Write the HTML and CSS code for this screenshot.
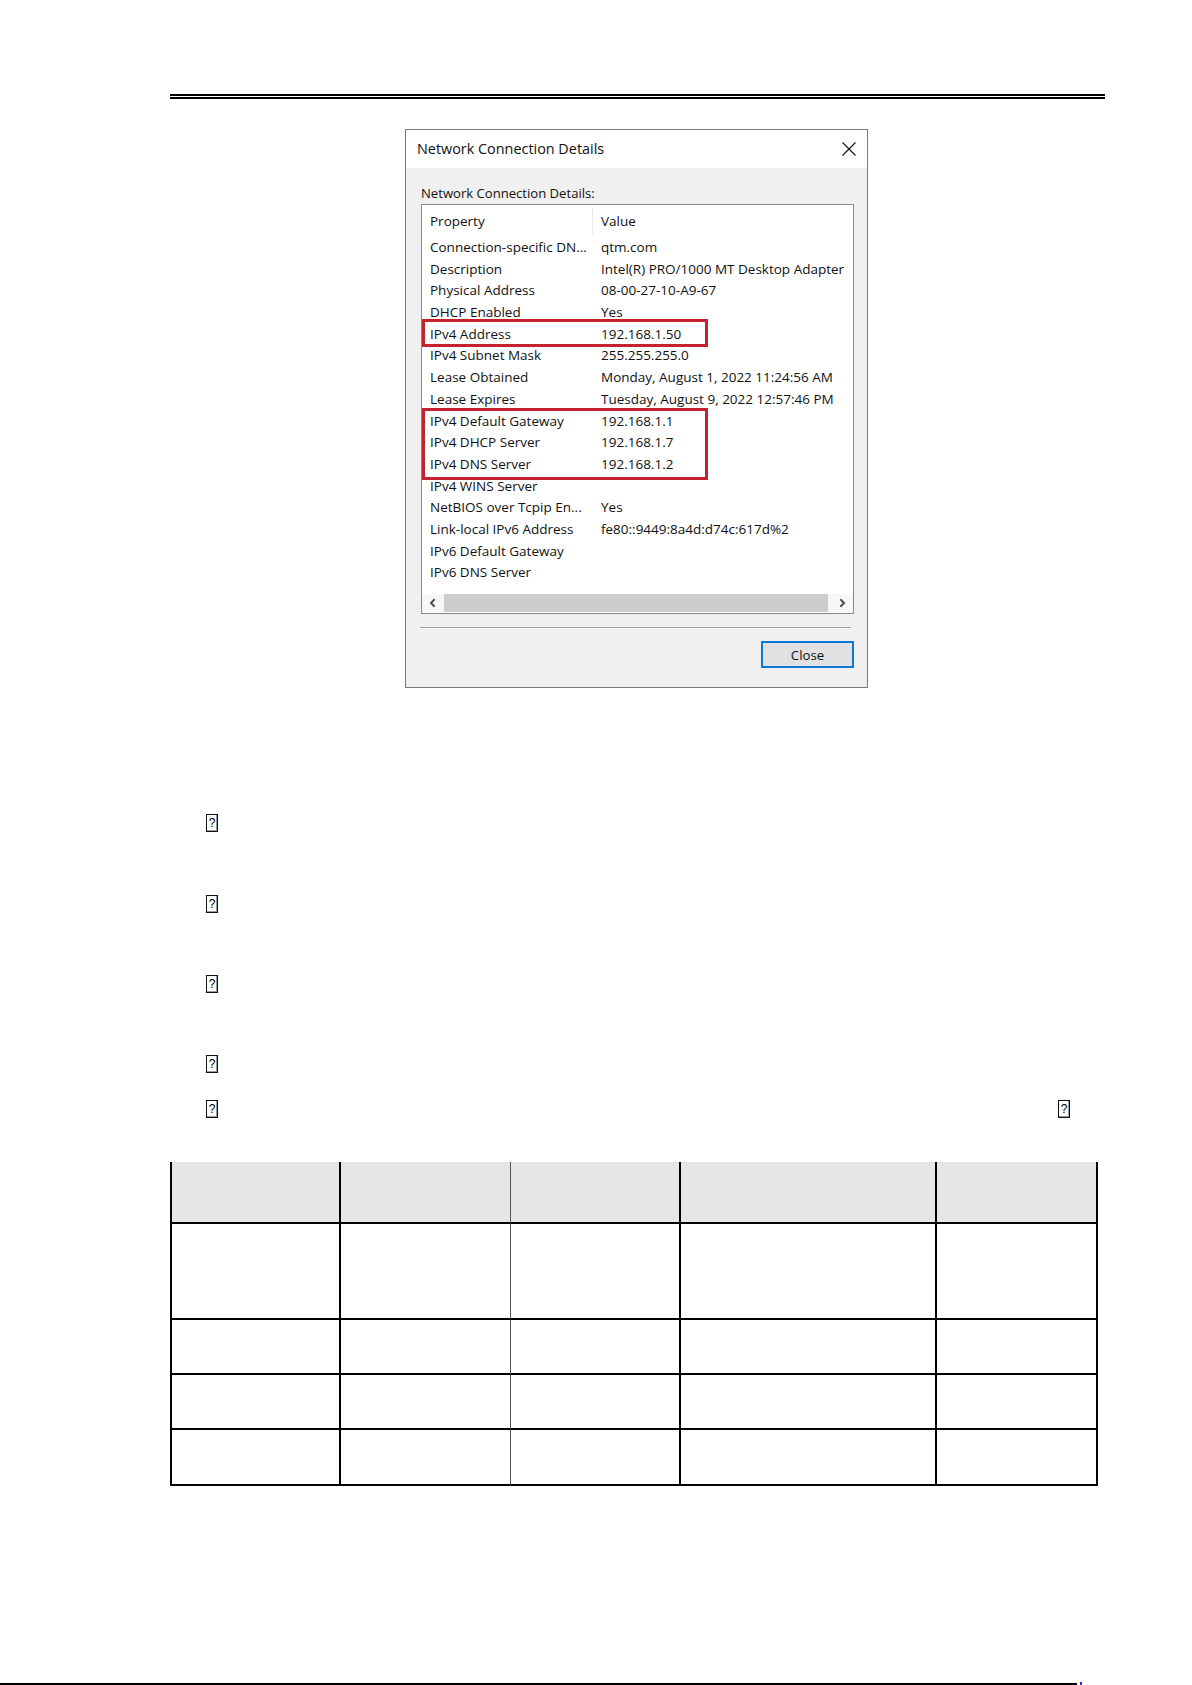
FILE: index.html
```html
<!DOCTYPE html>
<html lang="en">
<head>
<meta charset="utf-8">
<title>Network Connection Details</title>
<link rel="stylesheet" href="styles.css">
</head>
<body>
<div class="page">
  <div class="head-rule"></div>

  <div class="dialog">
    <div class="titlebar">
      <span class="title">Network Connection Details</span>
      <svg class="close-x" width="14" height="14" viewBox="0 0 14 14"><path d="M0.5 0.5 L13.5 13.5 M13.5 0.5 L0.5 13.5" stroke="#111" stroke-width="1.1" fill="none"/></svg>
    </div>
    <div class="dlg-body">
      <div class="label">Network Connection Details:</div>
      <div class="listbox">
        <div class="lv-head"><div class="c1">Property</div><div class="c2">Value</div></div>
        <div class="lv-rows">
          <div class="row"><span class="c1">Connection-specific DN...</span><span class="c2">qtm.com</span></div>
          <div class="row"><span class="c1">Description</span><span class="c2">Intel(R) PRO/1000 MT Desktop Adapter</span></div>
          <div class="row"><span class="c1">Physical Address</span><span class="c2">08-00-27-10-A9-67</span></div>
          <div class="row"><span class="c1">DHCP Enabled</span><span class="c2">Yes</span></div>
          <div class="row"><span class="c1">IPv4 Address</span><span class="c2">192.168.1.50</span></div>
          <div class="row"><span class="c1">IPv4 Subnet Mask</span><span class="c2">255.255.255.0</span></div>
          <div class="row"><span class="c1">Lease Obtained</span><span class="c2">Monday, August 1, 2022 11:24:56 AM</span></div>
          <div class="row"><span class="c1">Lease Expires</span><span class="c2">Tuesday, August 9, 2022 12:57:46 PM</span></div>
          <div class="row"><span class="c1">IPv4 Default Gateway</span><span class="c2">192.168.1.1</span></div>
          <div class="row"><span class="c1">IPv4 DHCP Server</span><span class="c2">192.168.1.7</span></div>
          <div class="row"><span class="c1">IPv4 DNS Server</span><span class="c2">192.168.1.2</span></div>
          <div class="row"><span class="c1">IPv4 WINS Server</span><span class="c2"></span></div>
          <div class="row"><span class="c1">NetBIOS over Tcpip En...</span><span class="c2">Yes</span></div>
          <div class="row"><span class="c1">Link-local IPv6 Address</span><span class="c2">fe80::9449:8a4d:d74c:617d%2</span></div>
          <div class="row"><span class="c1">IPv6 Default Gateway</span><span class="c2"></span></div>
          <div class="row"><span class="c1">IPv6 DNS Server</span><span class="c2"></span></div>
        </div>
        <div class="hscroll">
          <div class="arrow"><svg width="7" height="10" viewBox="0 0 7 10"><path d="M5.6 1.2 L2 5 L5.6 8.8" stroke="#505050" stroke-width="2" fill="none"/></svg></div>
          <div class="thumb"></div>
          <div class="arrow"><svg width="7" height="10" viewBox="0 0 7 10"><path d="M1.4 1.2 L5 5 L1.4 8.8" stroke="#505050" stroke-width="2" fill="none"/></svg></div>
        </div>
        <div class="hl hl-1"></div>
        <div class="hl hl-2"></div>
      </div>
      <div class="sep"></div>
      <div class="btn-row"><button class="btn" type="button">Close</button></div>
    </div>
  </div>

  <div class="notes">
    <div class="note n1"><span class="tofu">?</span></div>
    <div class="note n2"><span class="tofu">?</span></div>
    <div class="note n3"><span class="tofu">?</span></div>
    <div class="note n4"><span class="tofu">?</span></div>
    <div class="note n5"><span class="tofu">?</span><span class="tofu">?</span></div>
  </div>

  <div class="grid">
    <div class="cell hd"></div><div class="cell hd thin"></div><div class="cell hd"></div><div class="cell hd"></div><div class="cell hd"></div>
    <div class="cell"></div><div class="cell thin"></div><div class="cell"></div><div class="cell"></div><div class="cell"></div>
    <div class="cell"></div><div class="cell thin"></div><div class="cell"></div><div class="cell"></div><div class="cell"></div>
    <div class="cell"></div><div class="cell thin"></div><div class="cell"></div><div class="cell"></div><div class="cell"></div>
    <div class="cell"></div><div class="cell thin"></div><div class="cell"></div><div class="cell"></div><div class="cell"></div>
  </div>

  <div class="foot"><div class="foot-line"></div><div class="foot-mark"></div></div>
</div>
</body>
</html>
```

FILE: styles.css
```css
html, body {
  margin: 0;
  padding: 0;
  background: #fff;
}

.page {
  width: 1192px;
  font-family: "Liberation Sans", Arial, sans-serif;
  color: #000;
}

.head-rule {
  margin: 94px 0 0 170px;
  width: 935px;
  height: 1px;
  border-top: 2px solid #000;
  border-bottom: 2px solid #000;
}

/* ---------- dialog ---------- */
.dialog {
  margin: 30px 0 0 405px;
  width: 463px;
  box-sizing: border-box;
  border: 1px solid #7a7a7a;
  background: #f0f0f0;
  font-family: "Open Sans", "Noto Sans", sans-serif;
  color: #111;
}

.titlebar {
  height: 38px;
  background: #fff;
  display: flex;
  align-items: center;
  justify-content: space-between;
  padding: 0 11px 0 11px;
}

.title {
  font-size: 14.4px;
  line-height: 18px;
}

.close-x {
  display: block;
}

.dlg-body {
  padding: 16px 13px 19px 15px;
}

.label {
  font-size: 13.1px;
  line-height: 18px;
}

.listbox {
  position: relative;
  margin-top: 2px;
  height: 410px;
  box-sizing: border-box;
  border: 1px solid #86888c;
  background: #fff;
  display: flex;
  flex-direction: column;
  font-size: 13.5px;
}

.lv-head {
  height: 32px;
  display: flex;
  align-items: center;
}

.lv-head .c1 {
  width: 171px;
  box-sizing: border-box;
  height: 28px;
  line-height: 28px;
  padding-left: 8px;
  border-right: 1px solid #e8e8e8;
}

.lv-head .c2 {
  padding-left: 8px;
  line-height: 28px;
}

.row {
  display: flex;
  height: 21.7px;
  line-height: 21.7px;
  white-space: nowrap;
}

.row .c1 {
  width: 171px;
  flex: none;
  box-sizing: border-box;
  padding-left: 8px;
  overflow: hidden;
}

.row .c2 {
  padding-left: 8px;
  overflow: hidden;
}

.hscroll {
  margin-top: auto;
  margin-bottom: 1px;
  height: 18px;
  display: flex;
  background: #f7f7f7;
}

.arrow {
  width: 21px;
  flex: none;
  display: flex;
  align-items: center;
  justify-content: center;
}

.thumb {
  flex: 1;
  margin: 0 4px 0 1px;
  background: #cdcdcd;
}

.hl {
  position: absolute;
  left: 0;
  width: 286px;
  box-sizing: border-box;
  border: 3px solid #c4222c;
}

.hl-1 {
  top: 114px;
  height: 28px;
}

.hl-2 {
  top: 203px;
  height: 72px;
}

.sep {
  margin: 13px 3px 0 -1px;
  height: 1px;
  background: #a0a0a0;
  border-bottom: 1px solid #fff;
}

.btn-row {
  display: flex;
  justify-content: flex-end;
  margin-top: 12px;
}

.btn {
  width: 93px;
  height: 27px;
  box-sizing: border-box;
  border: 2px solid #0a78d4;
  background: #e1e1e1;
  font-family: "Open Sans", "Noto Sans", sans-serif;
  font-size: 13.2px;
  color: #111;
  padding: 0;
}

/* ---------- missing-glyph lines ---------- */
.notes {
  margin: 126px 0 0 206px;
  width: 864px;
}

.note {
  height: 18px;
  display: flex;
  justify-content: space-between;
}

.n2, .n3, .n4 {
  margin-top: 62px;
}

.n2 {
  margin-top: 63px;
}

.n5 {
  margin-top: 27px;
}

.tofu {
  display: inline-flex;
  align-items: center;
  justify-content: center;
  width: 12px;
  height: 18px;
  box-sizing: border-box;
  border: 1px solid #111;
  box-shadow: inset -1px -1px 0 #9a9a9a;
  font-family: "Liberation Sans", Arial, sans-serif;
  font-size: 12px;
  line-height: 1;
  color: #000;
}

/* ---------- empty table ---------- */
.grid {
  margin: 44px 0 0 170px;
  display: grid;
  grid-template-columns: 169px 170px 170px 256px 161px;
  grid-template-rows: 62px 96px 55px 55px 56px;
  width: max-content;
  border-left: 2px solid #000;
}

.cell {
  box-sizing: border-box;
  border-right: 2px solid #000;
  border-bottom: 2px solid #000;
}

.cell.thin {
  border-right: 1px solid #555;
}

.cell.hd {
  background: #e6e6e6;
}

/* ---------- footer rule ---------- */
.foot {
  margin-top: 196px;
  display: flex;
  align-items: flex-end;
}

.foot-line {
  width: 1077px;
  height: 2px;
  background: #000;
}

.foot-mark {
  width: 2px;
  height: 3px;
  margin-left: 3px;
  background: #2a2ad0;
}
```
